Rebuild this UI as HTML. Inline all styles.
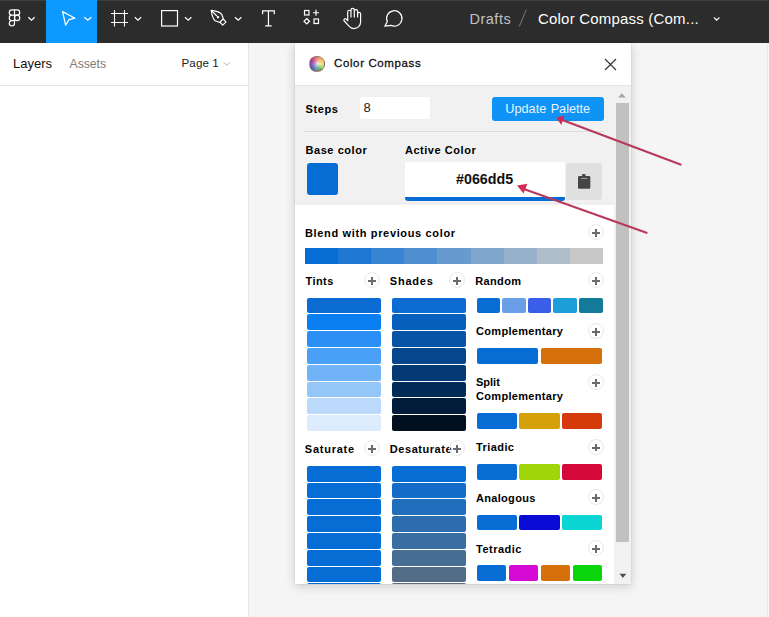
<!DOCTYPE html>
<html><head><meta charset="utf-8">
<style>
*{box-sizing:border-box;margin:0;padding:0}
html,body{width:769px;height:617px;overflow:hidden;background:#f5f5f5;font-family:"Liberation Sans",sans-serif;position:relative}
.a{position:absolute}
.t{position:absolute;white-space:nowrap;line-height:1}
#tb{left:0;top:0;width:769px;height:43px;background:#2c2c2c;border-top:1px solid #3e3e3e}
#sel{left:46px;top:0;width:51px;height:43px;background:#0d99ff}
#lp{left:0;top:43px;width:249px;height:574px;background:#fff;border-right:1px solid #e5e5e5}
#lph{left:0;top:85px;width:248px;height:1px;background:#e5e5e5}
#rp{left:767px;top:43px;width:2px;height:574px;background:#f9f9f9;border-left:1px solid #ebebeb}
#plug{left:295px;top:43px;width:336px;height:541px;background:#fff;box-shadow:0 2px 10px rgba(0,0,0,.18),0 0 1px rgba(0,0,0,.2);overflow:hidden}
.lbl{font-weight:700;font-size:12px;color:#000}
.plus{position:absolute;width:16px;height:16px;border-radius:50%;border:1px solid #e9e9e9;background:transparent}
.plus:before,.plus:after{content:"";position:absolute;background:#6a6a6a}
.plus:before{left:3px;top:6.8px;width:8px;height:1.9px}
.plus:after{left:6.05px;top:3.8px;width:1.9px;height:7.8px}
.sw{position:absolute;border-radius:2px}
</style></head><body>
<!-- toolbar -->
<div id="tb" class="a"></div>
<div id="sel" class="a"></div>
<svg class="a" style="left:0;top:0" width="769" height="43" viewBox="0 0 769 43">
 <g fill="none" stroke="#fff" stroke-width="1.2">
  <path d="M14.5 9.8H11.9A2.6 2.7 0 0 0 11.9 15.2H14.5Z M14.5 9.8H17.1A2.6 2.7 0 0 1 17.1 15.2H14.5Z M14.5 15.2H11.9A2.6 2.7 0 0 0 11.9 20.6H14.5Z M14.5 20.6H11.9A2.6 2.7 0 1 0 14.5 23.3Z"/>
  <ellipse cx="17.1" cy="17.9" rx="2.6" ry="2.7"/>
  <path d="M28.3 17.3l3.2 3 3.2-3" />
  <path d="M62.6 11.6L75 18.2L69 19.6L65.6 25.2Z" stroke-linejoin="round"/>
  <path d="M84.3 17.3l3.5 3 3.5-3"/>
  <path d="M114.5 10v16.5 M124.5 10v16.5 M111 13.5h17 M111 22.5h17" stroke-width="1.1"/>
  <path d="M134.8 17.3l3.2 2.8 3.2-2.8"/>
  <rect x="161.6" y="10.6" width="15.9" height="15.4"/>
  <path d="M185 17.3l3.2 2.8 3.2-2.8"/>
  <g transform="translate(211.2 10.3) rotate(-45)">
   <path d="M0 0C2.2 3 5 6.5 4.6 10.2L2.6 14.6H-2.6L-4.6 10.2C-5 6.5 -2.2 3 0 0Z M-2.3 14.6V18.6H2.3V14.6" stroke-linejoin="round"/>
   <path d="M0 0.5V8"/>
   <circle cx="0" cy="9.6" r="1.3" fill="#fff" stroke="none"/>
  </g>
  <path d="M235 17.3l3.2 2.8 3.2-2.8"/>
  <path d="M262.6 14.2V10.9H274.3V14.2 M268.45 10.9V25.8 M265.2 25.8H271.7"/>
  <rect x="304.5" y="10.5" width="4.5" height="4.5"/>
  <path d="M313 12.75h6 M316 9.75v6"/>
  <path d="M306.75 18.5l2.75 2.75-2.75 2.75-2.75-2.75z"/>
  <rect x="314" y="19" width="4.5" height="4.5"/>
  <path d="M347.7 20.6V11.9a1.65 1.65 0 0 1 3.3 0V17.5 M351 17.5V10a1.65 1.65 0 0 1 3.3 0V17.5 M354.3 17.5V11.3a1.65 1.65 0 0 1 3.3 0V17.5 M357.6 17.5V13.9a1.5 1.5 0 0 1 3 0V22c0 3.6-2.9 6.6-6.6 6.6c-2 0-3.3-.8-4.5-2l-5.3-5.6a1.35 1.35 0 0 1 1.9-1.9l2.1 1.9"/>
  <path d="M387.3 21.65L384.8 26.2L391.05 25.4A7.7 7.7 0 1 0 387.3 21.65Z" stroke-linejoin="round"/>
 </g>
 <text x="469.5" y="23.8" font-family="Liberation Sans" font-size="14.5" fill="#c2c2c2" letter-spacing="0.5">Drafts</text>
 <path d="M526.3 9.5l-7 17" stroke="#6e6e6e" stroke-width="1.1"/>
 <text x="538" y="24" font-family="Liberation Sans" font-size="15" fill="#fff" letter-spacing="0.2">Color Compass (Com...</text>
 <path d="M714 17.5l2.7 2.7 2.7-2.7" stroke="#fff" stroke-width="1.1" fill="none"/>
</svg>

<!-- left panel -->
<div id="lp" class="a"></div>
<div id="lph" class="a"></div>
<div class="t" style="left:13px;top:57px;font-size:13px;color:#111">Layers</div>
<div class="t" style="left:69.5px;top:57.7px;font-size:12.2px;color:#7c7c7c">Assets</div>
<div class="t" style="left:181.5px;top:57px;font-size:11.6px;color:#222;letter-spacing:0.1px">Page 1</div>
<svg class="a" style="left:222px;top:60px" width="10" height="8"><path d="M2 2.5l2.8 2.8 2.8-2.8" stroke="#b0b0b0" stroke-width="1" fill="none"/></svg>
<div id="rp" class="a"></div>

<!-- plugin -->
<div id="plug" class="a">
<div class="a" style="left:0.00px;top:42.00px;width:336.00px;height:1.00px;background:#e6e6e6;"></div>
<div class="a" style="left:14.2px;top:13.4px;width:15.6px;height:15.6px;border-radius:50%;border:1px solid rgba(140,100,80,.55);background:radial-gradient(circle at 50% 50%,rgba(255,255,255,.75) 0,rgba(255,255,255,.25) 35%,rgba(255,255,255,0) 65%),conic-gradient(from 0deg,#f08070,#f0c060 50deg,#e8e870 90deg,#a0d070 125deg,#60a860 150deg,#5888a8 195deg,#5060a8 225deg,#7050b0 260deg,#9a3c98 295deg,#d04880 330deg,#f08070)"></div>
<div class="t" style="left:39.00px;top:15.27px;font-size:11.5px;font-weight:400;color:#111;letter-spacing:0.62px;-webkit-text-stroke:0.3px #111;">Color Compass</div>
<svg class="a" style="left:309px;top:15px" width="13" height="13" viewBox="0 0 13 13"><path d="M1 1L12 12M12 1L1 12" stroke="#333" stroke-width="1.15"/></svg>
<div class="a" style="left:0;top:43px;width:321px;height:116.5px;background:#f1f1f1;box-shadow:0 1px 2px rgba(0,0,0,.12)"></div>
<div class="t" style="left:10.40px;top:60.99px;font-size:11px;font-weight:700;color:#000;letter-spacing:0.65px;">Steps</div>
<div class="a" style="left:65.00px;top:54.00px;width:70.00px;height:21.60px;background:#fff;border-radius:2px"></div>
<div class="t" style="left:68.50px;top:57.90px;font-size:13px;font-weight:400;color:#222;">8</div>
<div class="a" style="left:197px;top:54px;width:112px;height:23.5px;background:#0f93f4;border-radius:3px"></div>
<div class="t" style="left:210.30px;top:60.05px;font-size:12.7px;font-weight:400;color:#e4f5ff;word-spacing:0.9px;">Update Palette</div>
<div class="a" style="left:9.00px;top:88.00px;width:300.00px;height:1.00px;background:#dcdcdc;"></div>
<div class="t" style="left:10.50px;top:101.99px;font-size:11px;font-weight:700;color:#000;letter-spacing:0.56px;">Base color</div>
<div class="t" style="left:109.90px;top:101.89px;font-size:11px;font-weight:700;color:#000;letter-spacing:0.55px;">Active Color</div>
<div class="a" style="left:12.00px;top:120.00px;width:31.00px;height:32.00px;background:#066dd5;border-radius:3px"></div>
<div class="a" style="left:110px;top:119px;width:160.3px;height:38.6px;background:#fff;border-bottom:4.3px solid #066dd5;border-radius:0 0 3px 3px"></div>
<div class="t" style="left:161.00px;top:128.70px;font-size:14.3px;font-weight:700;color:#111;">#066dd5</div>
<div class="a" style="left:271.00px;top:120.00px;width:36.00px;height:36.60px;background:#e0e0e0;border-radius:3px"></div>
<svg class="a" style="left:283px;top:131px" width="13" height="16" viewBox="0 0 13 16"><rect x="0" y="1.9" width="12.3" height="12.9" rx="1.3" fill="#454545"/><rect x="4.1" y="0.1" width="3.4" height="2.6" rx="0.8" fill="#454545"/><rect x="3" y="3.9" width="6.2" height="1.1" fill="#9a9a9a"/></svg>
<div class="t" style="left:10.00px;top:184.69px;font-size:11px;font-weight:700;color:#000;letter-spacing:0.65px;">Blend with previous color</div>
<div class="plus" style="left:292.60px;top:181.00px"></div>
<div class="a" style="left:10.00px;top:205.00px;width:33.00px;height:16.00px;background:#066dd5;"></div>
<div class="a" style="left:43.00px;top:205.00px;width:33.00px;height:16.00px;background:#1e78d3;"></div>
<div class="a" style="left:76.00px;top:205.00px;width:33.00px;height:16.00px;background:#3684d2;"></div>
<div class="a" style="left:109.00px;top:205.00px;width:33.00px;height:16.00px;background:#4f8fd0;"></div>
<div class="a" style="left:142.00px;top:205.00px;width:34.00px;height:16.00px;background:#679ace;"></div>
<div class="a" style="left:176.00px;top:205.00px;width:33.00px;height:16.00px;background:#7fa6cd;"></div>
<div class="a" style="left:209.00px;top:205.00px;width:33.00px;height:16.00px;background:#98b1cb;"></div>
<div class="a" style="left:242.00px;top:205.00px;width:33.00px;height:16.00px;background:#b0bdca;"></div>
<div class="a" style="left:275.00px;top:205.00px;width:33.00px;height:16.00px;background:#c8c8c8;"></div>
<div class="t" style="left:10.50px;top:232.59px;font-size:11px;font-weight:700;color:#000;letter-spacing:0.43px;">Tints</div>
<div class="plus" style="left:68.80px;top:229.20px"></div>
<div class="t" style="left:94.80px;top:232.59px;font-size:11px;font-weight:700;color:#000;letter-spacing:0.78px;">Shades</div>
<div class="plus" style="left:154.00px;top:229.20px"></div>
<div class="t" style="left:180.20px;top:232.89px;font-size:11px;font-weight:700;color:#000;letter-spacing:0.36px;">Random</div>
<div class="plus" style="left:293.00px;top:229.20px"></div>
<div class="sw" style="left:12.00px;top:255.00px;width:74.00px;height:15.00px;background:#0a6cd2"></div>
<div class="sw" style="left:97.00px;top:255.00px;width:74.00px;height:15.00px;background:#0c6cd4"></div>
<div class="sw" style="left:12.00px;top:271.00px;width:74.00px;height:16.00px;background:#0a7ff2"></div>
<div class="sw" style="left:97.00px;top:271.00px;width:74.00px;height:16.00px;background:#0760be"></div>
<div class="sw" style="left:12.00px;top:288.00px;width:74.00px;height:16.00px;background:#2b8ff5"></div>
<div class="sw" style="left:97.00px;top:288.00px;width:74.00px;height:16.00px;background:#0653a6"></div>
<div class="sw" style="left:12.00px;top:305.00px;width:74.00px;height:16.00px;background:#4aa0f7"></div>
<div class="sw" style="left:97.00px;top:305.00px;width:74.00px;height:16.00px;background:#05468d"></div>
<div class="sw" style="left:12.00px;top:322.00px;width:74.00px;height:16.00px;background:#70b3f7"></div>
<div class="sw" style="left:97.00px;top:322.00px;width:74.00px;height:16.00px;background:#033a73"></div>
<div class="sw" style="left:12.00px;top:339.00px;width:74.00px;height:15.00px;background:#95c6f8"></div>
<div class="sw" style="left:97.00px;top:339.00px;width:74.00px;height:15.00px;background:#032b57"></div>
<div class="sw" style="left:12.00px;top:355.00px;width:74.00px;height:16.00px;background:#bad9fb"></div>
<div class="sw" style="left:97.00px;top:355.00px;width:74.00px;height:16.00px;background:#021d3b"></div>
<div class="sw" style="left:12.00px;top:372.00px;width:74.00px;height:16.00px;background:#ddecfc"></div>
<div class="sw" style="left:97.00px;top:372.00px;width:74.00px;height:16.00px;background:#010f1f"></div>
<div class="sw" style="left:182.00px;top:255.00px;width:23.00px;height:15.00px;background:#066dd5"></div>
<div class="sw" style="left:207.00px;top:255.00px;width:24.00px;height:15.00px;background:#6a9ee8"></div>
<div class="sw" style="left:233.00px;top:255.00px;width:23.00px;height:15.00px;background:#3a5ee8"></div>
<div class="sw" style="left:258.00px;top:255.00px;width:24.00px;height:15.00px;background:#1c9fd8"></div>
<div class="sw" style="left:284.00px;top:255.00px;width:24.00px;height:15.00px;background:#137a9a"></div>
<div class="t" style="left:181.00px;top:283.49px;font-size:11px;font-weight:700;color:#000;letter-spacing:0.32px;">Complementary</div>
<div class="plus" style="left:293.20px;top:280.20px"></div>
<div class="sw" style="left:182.00px;top:305.00px;width:61.00px;height:16.00px;background:#066dd5"></div>
<div class="sw" style="left:246.00px;top:305.00px;width:61.00px;height:16.00px;background:#d5700a"></div>
<div class="t" style="left:181.00px;top:334.49px;font-size:11px;font-weight:700;color:#000;letter-spacing:0px;">Split</div>
<div class="t" style="left:181.00px;top:348.49px;font-size:11px;font-weight:700;color:#000;letter-spacing:0.32px;">Complementary</div>
<div class="plus" style="left:293.00px;top:331.40px"></div>
<div class="sw" style="left:182.00px;top:370.00px;width:40.00px;height:16.00px;background:#066dd5"></div>
<div class="sw" style="left:224.00px;top:370.00px;width:41.00px;height:16.00px;background:#d5a00a"></div>
<div class="sw" style="left:267.00px;top:370.00px;width:40.00px;height:16.00px;background:#d53a0a"></div>
<div class="t" style="left:181.00px;top:398.89px;font-size:11px;font-weight:700;color:#000;letter-spacing:0.42px;">Triadic</div>
<div class="plus" style="left:293.00px;top:395.90px"></div>
<div class="sw" style="left:182.00px;top:421.00px;width:40.00px;height:16.00px;background:#066dd5"></div>
<div class="sw" style="left:224.00px;top:421.00px;width:41.00px;height:16.00px;background:#a0d50a"></div>
<div class="sw" style="left:267.00px;top:421.00px;width:40.00px;height:16.00px;background:#d50a3a"></div>
<div class="t" style="left:181.00px;top:449.69px;font-size:11px;font-weight:700;color:#000;letter-spacing:0.31px;">Analogous</div>
<div class="plus" style="left:293.00px;top:446.40px"></div>
<div class="sw" style="left:182.00px;top:472.00px;width:40.00px;height:15.00px;background:#066dd5"></div>
<div class="sw" style="left:224.00px;top:472.00px;width:41.00px;height:15.00px;background:#0a0ad5"></div>
<div class="sw" style="left:267.00px;top:472.00px;width:40.00px;height:15.00px;background:#0ad5d5"></div>
<div class="t" style="left:181.00px;top:500.99px;font-size:11px;font-weight:700;color:#000;letter-spacing:0.5px;">Tetradic</div>
<div class="plus" style="left:293.00px;top:497.20px"></div>
<div class="sw" style="left:182.00px;top:522.00px;width:29.00px;height:16.00px;background:#066dd5"></div>
<div class="sw" style="left:214.00px;top:522.00px;width:29.00px;height:16.00px;background:#d50ad5"></div>
<div class="sw" style="left:246.00px;top:522.00px;width:29.00px;height:16.00px;background:#d5700a"></div>
<div class="sw" style="left:278.00px;top:522.00px;width:29.00px;height:16.00px;background:#0ad50a"></div>
<div class="t" style="left:9.80px;top:400.79px;font-size:11px;font-weight:700;color:#000;letter-spacing:0.76px;">Saturate</div>
<div class="plus" style="left:68.80px;top:397.40px"></div>
<div class="t" style="left:94.80px;top:400.79px;font-size:11px;font-weight:700;color:#000;letter-spacing:0.55px;">Desaturate</div>
<div class="plus" style="left:154.00px;top:397.40px"></div>
<div class="sw" style="left:12.00px;top:423.00px;width:74.00px;height:16.00px;background:#066dd5"></div>
<div class="sw" style="left:97.00px;top:423.00px;width:74.00px;height:16.00px;background:#066dd5"></div>
<div class="sw" style="left:12.00px;top:440.00px;width:74.00px;height:15.00px;background:#066dd5"></div>
<div class="sw" style="left:97.00px;top:440.00px;width:74.00px;height:15.00px;background:#136dc8"></div>
<div class="sw" style="left:12.00px;top:456.00px;width:74.00px;height:16.00px;background:#066dd5"></div>
<div class="sw" style="left:97.00px;top:456.00px;width:74.00px;height:16.00px;background:#206dbb"></div>
<div class="sw" style="left:12.00px;top:473.00px;width:74.00px;height:16.00px;background:#066dd5"></div>
<div class="sw" style="left:97.00px;top:473.00px;width:74.00px;height:16.00px;background:#2d6dae"></div>
<div class="sw" style="left:12.00px;top:490.00px;width:74.00px;height:16.00px;background:#066dd5"></div>
<div class="sw" style="left:97.00px;top:490.00px;width:74.00px;height:16.00px;background:#3a6da1"></div>
<div class="sw" style="left:12.00px;top:507.00px;width:74.00px;height:16.00px;background:#066dd5"></div>
<div class="sw" style="left:97.00px;top:507.00px;width:74.00px;height:16.00px;background:#476d94"></div>
<div class="sw" style="left:12.00px;top:524.00px;width:74.00px;height:15.00px;background:#066dd5"></div>
<div class="sw" style="left:97.00px;top:524.00px;width:74.00px;height:15.00px;background:#546d87"></div>
<div class="sw" style="left:12.00px;top:540.00px;width:74.00px;height:16.00px;background:#066dd5"></div>
<div class="sw" style="left:97.00px;top:540.00px;width:74.00px;height:16.00px;background:#616d7a"></div>
<div class="a" style="left:319.00px;top:43.00px;width:17.00px;height:498.00px;background:#f1f1f1;"></div>
<div class="a" style="left:321.20px;top:60.00px;width:12.80px;height:438.80px;background:#c1c1c1;"></div>
<svg class="a" style="left:323.3px;top:49.6px" width="10" height="6"><path d="M0.2 4.4L3.9 0.2L7.6 4.4z" fill="#a3a3a3"/></svg>
<svg class="a" style="left:323.5px;top:529.5px" width="10" height="6"><path d="M0.5 0.8L3.9 5L7.3 0.8z" fill="#505050"/></svg>
</div>
<svg class="a" style="left:0;top:0" width="769" height="617" viewBox="0 0 769 617">
<g stroke="#b8395c" stroke-width="2.2" stroke-linecap="round" fill="none"><path d="M680.5 164.5L561 119.5"/><path d="M646.5 232.8L521 188"/></g>
<g fill="#d22b55"><path d="M556.2 117.4L564.4 115.6L561.3 125z"/><path d="M517 185.6L527.4 183.7L523.5 193.4z"/></g>
</svg>
</body></html>
